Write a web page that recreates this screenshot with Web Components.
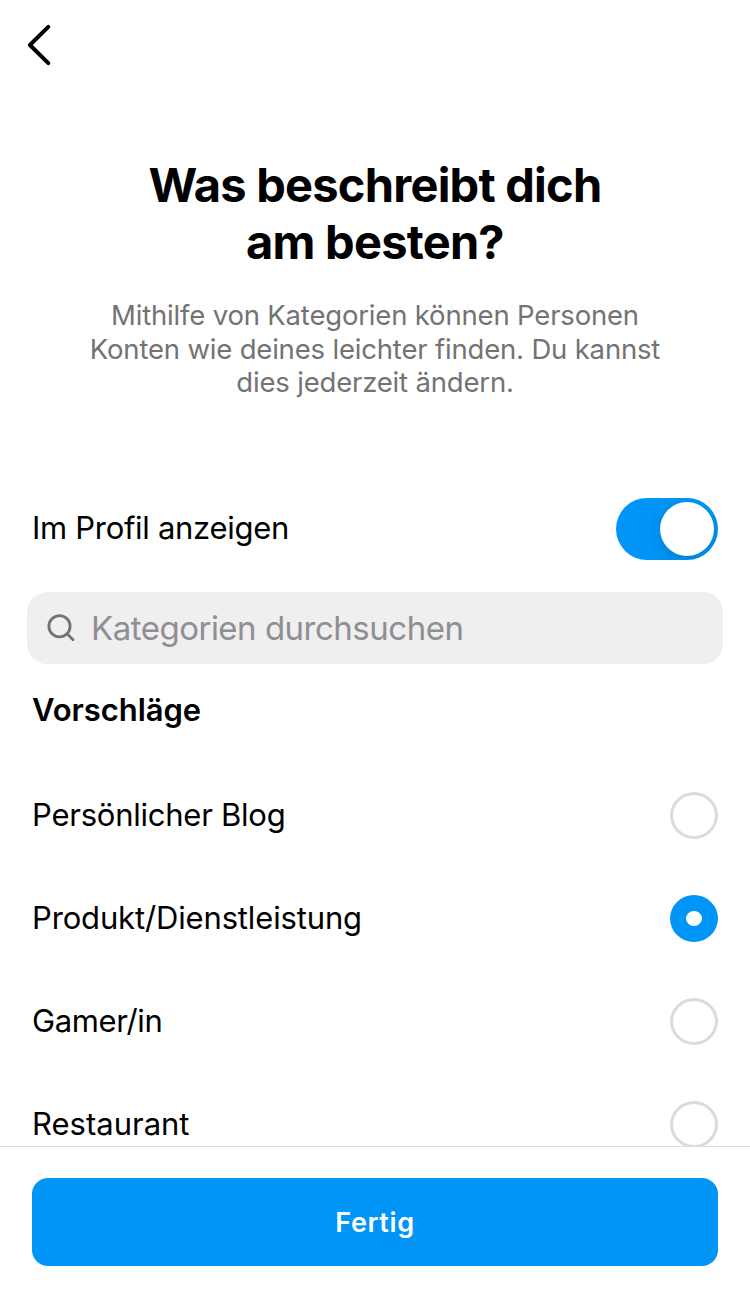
<!DOCTYPE html>
<html lang="de">
<head>
<meta charset="utf-8">
<title>Kategorie</title>
<style>
  html, body {
    margin: 0;
    height: 100%;
    background: #fff;
  }

  body {
    font-family: Inter, "Liberation Sans", sans-serif;
    color: #000;
    overflow: hidden;
  }
</style>
</head>
<body>

<category-page>
  <back-button slot="nav"></back-button>
  <page-intro slot="intro">
    <span slot="title">Was beschreibt dich<br>am besten?</span>
    Mithilfe von Kategorien können Personen<br>Konten wie deines leichter finden. Du kannst<br>dies jederzeit ändern.
  </page-intro>
  <toggle-row checked>Im Profil anzeigen</toggle-row>
  <search-field placeholder="Kategorien durchsuchen"></search-field>
  <section-title>Vorschläge</section-title>
  <radio-row style="--tracking: -0.24px">Persönlicher Blog</radio-row>
  <radio-row style="--tracking: -0.15px" checked>Produkt/Dienstleistung</radio-row>
  <radio-row style="--tracking: -0.38px">Gamer/in</radio-row>
  <radio-row>Restaurant</radio-row>
  <primary-button slot="footer">Fertig</primary-button>
</category-page>

<script>
(function () {

  function define(name, html, setup) {
    customElements.define(name, class extends HTMLElement {

      constructor() {
        super();
        this.attachShadow({ mode: "open" });
        this.shadowRoot.innerHTML = html;
      }

      connectedCallback() {
        if (setup) {
          setup(this, this.shadowRoot);
        }
      }
    });
  }

  define("category-page", `
    <style>
      :host {
        display: flex;
        flex-direction: column;
        height: 1297px;
        background: #fff;
      }

      main {
        flex: 1;
        min-height: 0;
        overflow: hidden;
      }

      footer {
        box-sizing: border-box;
        height: 151px;
        padding: 31px 32px 0;
        border-top: 1px solid #dbdbdb;
      }
    </style>
    <slot name="nav"></slot>
    <main>
      <slot name="intro"></slot>
      <slot></slot>
    </main>
    <footer><slot name="footer"></slot></footer>
  `);

  define("back-button", `
    <style>
      :host {
        display: flex;
        align-items: center;
        height: 90px;
        padding-left: 24px;
      }
    </style>
    <svg width="30" height="46" viewBox="0 0 30 46" fill="none" stroke="#000"
      stroke-width="4" stroke-linecap="round" stroke-linejoin="round">
      <path d="M24.3 4.9 5.9 23 24.3 41.1"/>
    </svg>
  `);

  define("page-intro", `
    <style>
      :host {
        display: block;
        padding-top: 66px;
        height: 326px;
        text-align: center;
      }

      h1 {
        margin: 0;
        font-size: 47px;
        line-height: 57px;
        font-weight: 700;
        letter-spacing: -0.78px;
      }

      p {
        margin: 29px 0 0;
        font-size: 27.5px;
        line-height: 33.6px;
        letter-spacing: -0.18px;
        color: #737373;
      }
    </style>
    <h1><slot name="title"></slot></h1>
    <p><slot></slot></p>
  `);

  define("toggle-row", `
    <style>
      :host {
        display: flex;
        align-items: center;
        justify-content: space-between;
        height: 94px;
        padding: 0 32px;
        font-size: 31px;
        letter-spacing: -0.3px;
      }

      span {
        padding-bottom: 3px;
      }

      .track {
        display: flex;
        align-items: center;
        box-sizing: border-box;
        width: 102px;
        height: 62px;
        padding: 0 4px;
        border-radius: 31px;
        background: #dbdbdb;
        overflow: hidden;
      }

      .thumb {
        width: 54px;
        height: 54px;
        border-radius: 50%;
        background: #fff;
        box-shadow: 0 5px 16px rgba(0, 0, 0, 0.14);
      }

      :host([checked]) .track {
        justify-content: flex-end;
        background: #0095f6;
      }
    </style>
    <span><slot></slot></span>
    <div class="track"><div class="thumb"></div></div>
  `);

  define("search-field", `
    <style>
      :host {
        display: flex;
        align-items: center;
        gap: 15px;
        height: 72px;
        margin: 16px 27px 0;
        padding-left: 19px;
        box-sizing: border-box;
        border-radius: 20px;
        background: #efefef;
        color: #8e8e93;
        font-size: 33px;
        letter-spacing: -0.5px;
      }
    </style>
    <svg width="30" height="30" viewBox="0 0 30 30" fill="none" stroke="#737373"
      stroke-width="2.8" stroke-linecap="round">
      <circle cx="13.5" cy="13.3" r="10.6"/>
      <path d="m21 20.8 6 6"/>
    </svg>
    <span></span>
  `, function (host, root) {
    root.querySelector("span").textContent = host.getAttribute("placeholder");
  });

  define("section-title", `
    <style>
      :host {
        display: flex;
        align-items: center;
        height: 90px;
        margin-bottom: 10px;
        padding: 0 32px;
        font-size: 31px;
        font-weight: 600;
        letter-spacing: -0.05px;
      }
    </style>
    <slot></slot>
  `);

  define("radio-row", `
    <style>
      :host {
        display: flex;
        align-items: center;
        justify-content: space-between;
        height: 103px;
        padding: 0 32px;
        font-size: 31px;
        letter-spacing: var(--tracking, 0);
      }

      span {
        padding-bottom: 2px;
      }

      .radio {
        box-sizing: border-box;
        width: 48px;
        height: 47px;
        border: 3px solid #dbdbdb;
        border-radius: 50%;
      }

      :host([checked]) .radio {
        border: 16px solid #0095f6;
      }
    </style>
    <span><slot></slot></span>
    <div class="radio"></div>
  `);

  define("primary-button", `
    <style>
      :host {
        display: flex;
        align-items: center;
        justify-content: center;
        height: 88px;
        border-radius: 16px;
        background: #0095f6;
        color: #fff;
        font-size: 27px;
        font-weight: 600;
        letter-spacing: 0.6px;
      }
    </style>
    <slot></slot>
  `);

})();
</script>
</body>
</html>
